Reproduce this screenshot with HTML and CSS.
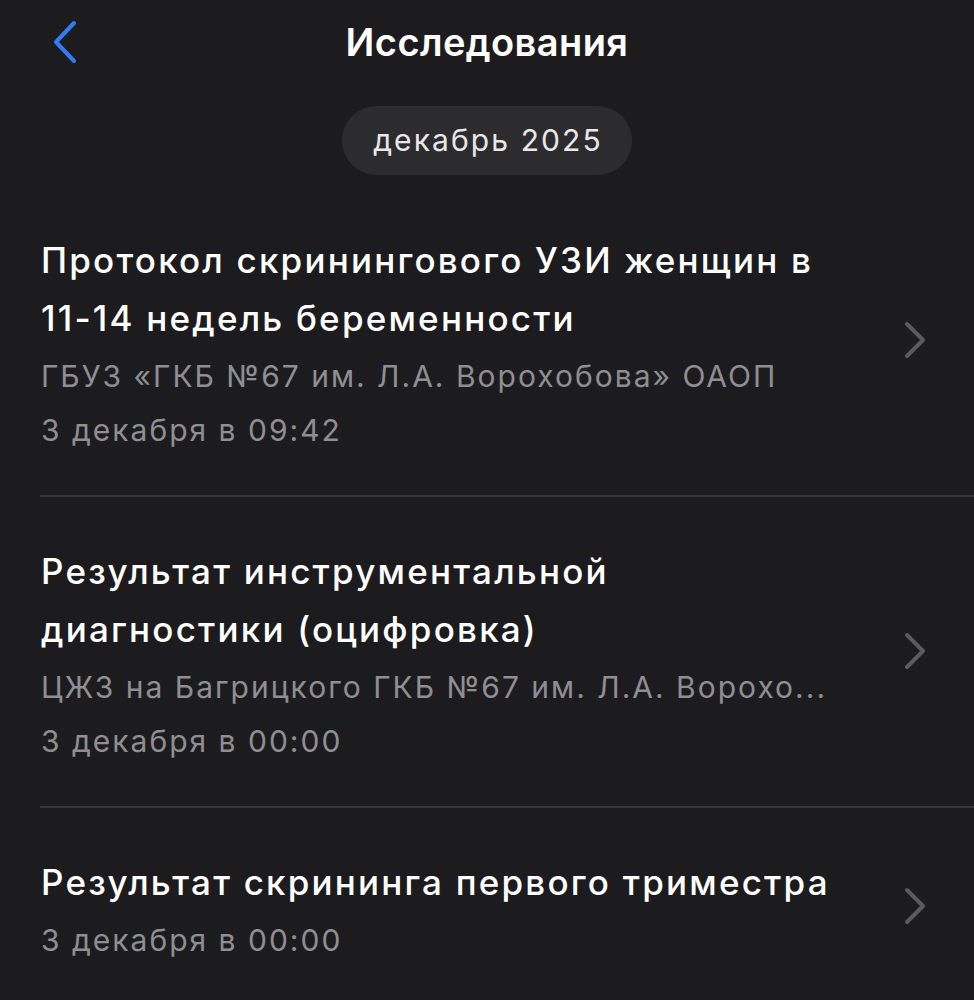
FILE: index.html
```html
<!DOCTYPE html>
<html lang="ru">

<head>
    <meta charset="UTF-8">
    <title>Исследования</title>
    <link rel="stylesheet" href="styles.css">
</head>

<body>
    <div class="screen">
        <header class="nav">
            <button class="nav-back" aria-label="Назад">
                <svg width="30" height="46" viewBox="0 0 30 46">
                    <path d="M26 4 L8 23 L26 42" fill="none" stroke="#2f7df6" stroke-width="4" stroke-linecap="round" stroke-linejoin="round" />
                </svg>
            </button>
            <h1 class="nav-title">Исследования</h1>
            <span></span>
        </header>

        <div class="month">
            <span class="month-pill">декабрь 2025</span>
        </div>

        <ul class="list">
            <li class="item">
                <div class="item-body">
                    <div class="item-title">Протокол скринингового УЗИ женщин в 11-14 недель беременности</div>
                    <div class="item-sub">ГБУЗ «ГКБ №67 им. Л.А. Ворохобова» ОАОП</div>
                    <div class="item-sub">3 декабря в 09:42</div>
                </div>
                <svg class="item-chevron" width="24" height="40" viewBox="0 0 24 40">
                    <path d="M4 4 L20 20 L4 36" fill="none" stroke="#5b5b5f" stroke-width="4" stroke-linecap="round" stroke-linejoin="round" />
                </svg>
            </li>
            <li class="item">
                <div class="item-body">
                    <div class="item-title">Результат инструментальной диагностики (оцифровка)</div>
                    <div class="item-sub">ЦЖЗ на Багрицкого ГКБ №67 им. Л.А. Ворохо...</div>
                    <div class="item-sub">3 декабря в 00:00</div>
                </div>
                <svg class="item-chevron" width="24" height="40" viewBox="0 0 24 40">
                    <path d="M4 4 L20 20 L4 36" fill="none" stroke="#5b5b5f" stroke-width="4" stroke-linecap="round" stroke-linejoin="round" />
                </svg>
            </li>
            <li class="item">
                <div class="item-body">
                    <div class="item-title">Результат скрининга первого триместра</div>
                    <div class="item-sub">3 декабря в 00:00</div>
                </div>
                <svg class="item-chevron" width="24" height="40" viewBox="0 0 24 40">
                    <path d="M4 4 L20 20 L4 36" fill="none" stroke="#5b5b5f" stroke-width="4" stroke-linecap="round" stroke-linejoin="round" />
                </svg>
            </li>
        </ul>
    </div>
</body>

</html>
```

FILE: styles.css
```css
* {
    margin: 0;
    padding: 0;
    box-sizing: border-box;
}

html,
body {
    background: #1c1c1e;
}

body {
    font-family: Inter, "Noto Sans", sans-serif;
    color: #fff;
    height: 1000px;
    overflow: hidden;
}

.nav {
    display: grid;
    grid-template-columns: 1fr auto 1fr;
    align-items: center;
    height: 84px;
    padding: 0 48px;
}

.nav-back {
    justify-self: start;
    display: flex;
    background: none;
    border: 0;
}

.nav-title {
    font-size: 38px;
    font-weight: 600;
    letter-spacing: 0.4px;
}

.month {
    display: flex;
    justify-content: center;
    padding: 22px 0 11px;
}

.month-pill {
    background: #2c2c2e;
    color: #e8e8ea;
    font-size: 30px;
    letter-spacing: 2.1px;
    line-height: 69px;
    padding: 0 29px 0 31px;
    border-radius: 35px;
}

.list {
    list-style: none;
    padding-left: 40px;
}

.item {
    display: flex;
    align-items: center;
    padding: 45px 46px 38px 1px;
    border-bottom: 2px solid #38383a;
}

.item:last-child {
    border-bottom: 0;
}

.item-body {
    width: 799px;
    margin-right: 63px;
}

.item-chevron {
    flex: none;
    margin-top: -8px;
}

.item-title {
    font-size: 35px;
    font-weight: 500;
    letter-spacing: 2.2px;
    line-height: 58px;
    margin-bottom: 2px;
}

.item-sub {
    font-size: 30px;
    letter-spacing: 2px;
    line-height: 54px;
    color: #8e8e93;
    white-space: nowrap;
}
```
